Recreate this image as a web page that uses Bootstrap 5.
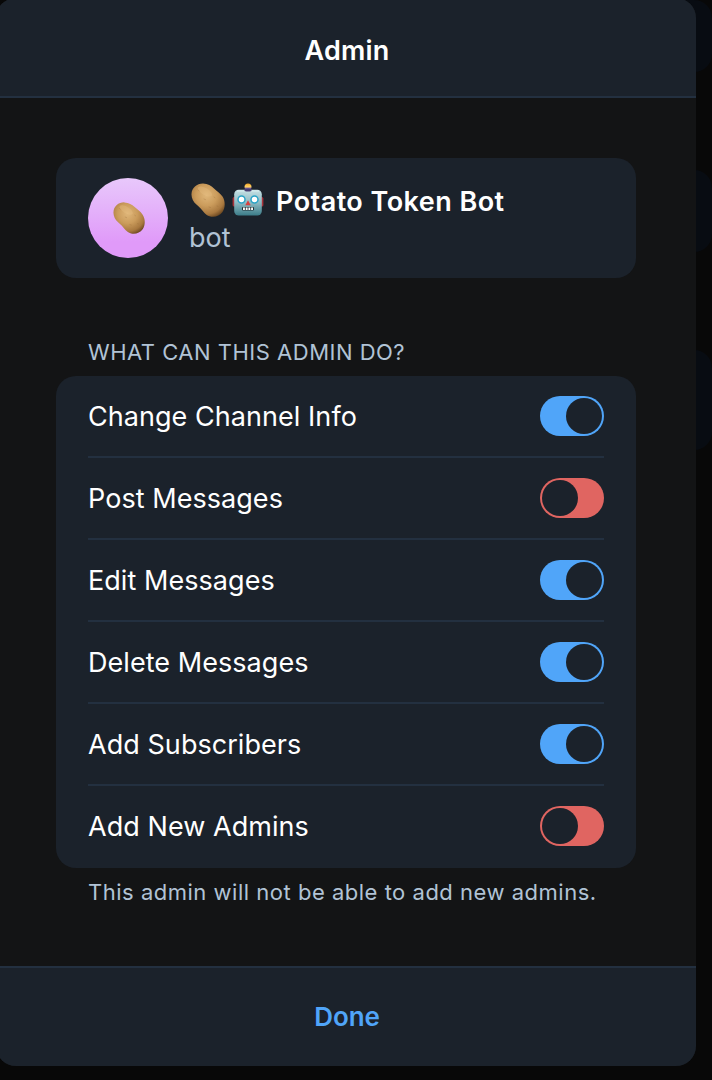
<!DOCTYPE html>
<html lang="en">
<head>
<meta charset="utf-8">
<meta name="viewport" content="width=device-width, initial-scale=1">
<title>Admin</title>
<link href="https://cdn.jsdelivr.net/npm/bootstrap@5.3.0/dist/css/bootstrap.min.css" rel="stylesheet">
<style>
  html, body { height: 100%; }
  body { background: #080808; font-family: Inter, "Liberation Sans", sans-serif; font-size: 27px; line-height: 36px; color: #fff; overflow: hidden; }
  .page { height: 1080px; width: 712px; }
  .backdrop-col { top: 0; right: 0; width: 40px; height: 100%; }
  .backdrop-item { background: #080c12; border-radius: 0 18px 18px 0; }
  .sheet { width: 700px; height: 1068px; margin: -2px 0 0 -4px; background: #131415; border-radius: 20px; }
  .bar { height: 100px; background: #1b222b; font-weight: 600; }
  .bar-top { border-bottom: 2px solid #233040; padding: 7px 0 0 2px; font-size: 27px; letter-spacing: .2px; }
  .bar-bottom { border-top: 2px solid #233040; color: #50a5f9; font-size: 26px; padding-left: 2px; letter-spacing: -.1px; }
  .sheet-body { padding: 60px 60px 0; }
  .panel { background: #1b222b; border-radius: 20px; }
  .profile { height: 120px; padding: 0 32px; gap: 20px; }
  .avatar { width: 80px; height: 80px; background: linear-gradient(#e8c8fb, #e09af9 80%); }
  .profile-text { padding-top: 4px; }
  .name { font-size: 27px; font-weight: 600; letter-spacing: .45px; }
  .muted { color: #b1c3d5; }
  .handle { padding-left: 1px; }
  .caption-top { margin: 56px 32px 6px; font-size: 22px; letter-spacing: .5px; height: 36px; }
  .caption-bottom { margin: 6px 32px 0; font-size: 22px; letter-spacing: .51px; }
  .perms { padding: 0 32px; }
  .perm { height: 82px; border-bottom: 2px solid #233040; letter-spacing: .05px; }
  .perm > span:first-child { padding-top: 2px; }
  .perm:last-child { border-color: transparent; }
  .toggle { width: 64px; height: 40px; padding: 2px; border-radius: 20px; background: #e06561; }
  .toggle::before { content: ""; display: block; width: 36px; height: 36px; border-radius: 50%; background: #1b222b; }
  .toggle[aria-checked=true] { background: #50a5f9; }
  .toggle[aria-checked=true]::before { margin-left: auto; }
</style>
</head>
<body>
<svg width="0" height="0" class="position-absolute" aria-hidden="true">
  <defs>
    <radialGradient id="skin" cx=".45" cy=".36" r=".7">
      <stop offset="0" stop-color="#dfb679"/><stop offset=".45" stop-color="#cb9c5c"/><stop offset=".8" stop-color="#a8783f"/><stop offset="1" stop-color="#6b4720"/>
    </radialGradient>
    <linearGradient id="metal" x1="0" y1="0" x2="0" y2="1">
      <stop offset="0" stop-color="#c6e1e5"/><stop offset=".5" stop-color="#8ebac3"/><stop offset="1" stop-color="#3b7c88"/>
    </linearGradient>
    <linearGradient id="bulb" x1="0" y1="0" x2="0" y2="1">
      <stop offset="0" stop-color="#f2a324"/><stop offset=".5" stop-color="#ffd56b"/><stop offset=".68" stop-color="#6b5390"/><stop offset="1" stop-color="#3f3472"/>
    </linearGradient>
    <symbol id="potato" viewBox="0 0 34 34">
      <path d="M.5 11C.7 4.500 6 .3 12 .4C17 .5 20 2.600 23 5.400C26 8.200 29 9.800 31.500 13.500C34.600 18 34.300 25 31.500 29C28.500 33.300 23 34.600 18.500 33.200C14.500 32 12.300 28.300 9.200 24.900C6.500 22 3.600 20.900 1.800 17C.9 15 .4 13 .5 11Z" fill="url(#skin)"/>
      <g fill="none" stroke="#8c602e" stroke-width="1" stroke-linecap="round" opacity=".25">
        <path d="M7 7l1.500 1M13 16l1.500.6M23 14l1 .7M18 24l1.500.5M26 23l1 .3"/>
      </g>
      <ellipse cx="14" cy="8.500" rx="8" ry="3.500" transform="rotate(30 14 8.500)" fill="#e9c185" opacity=".35"/>
    </symbol>
    <symbol id="robot" viewBox="0 0 32 34">
      <rect x=".6" y="14" width="4" height="9.500" rx="1.500" fill="#a8323a"/>
      <rect x="27.400" y="14" width="4" height="9.500" rx="1.500" fill="#a8323a"/>
      <rect x="2.200" y="6.800" width="27.600" height="25.700" rx="4.500" fill="url(#metal)"/>
      <path d="M5.500 8h21" stroke="#e4f4f5" stroke-width="1.200" stroke-linecap="round" opacity=".7"/>
      <circle cx="16" cy="4" r="3.500" fill="url(#bulb)"/>
      <path d="M12.700 6.500q3.300-1.500 6.600 0l.2 1.500q-3.500 1.200-7 0z" fill="#473d70"/>
      <g stroke="#2aa3c7" stroke-width="1.500" fill="#fff"><circle cx="9.500" cy="16.500" r="3.500"/><circle cx="22.500" cy="16.500" r="3.500"/></g>
      <path d="M16 17.200l2.700 5h-5.400z" fill="#d7403f"/>
      <rect x="10" y="24" width="12" height="3.400" rx="1" fill="#202b30"/>
      <path d="M11 25.700h10" stroke="#fff" stroke-width="2.400" stroke-dasharray="1.900 .8"/>
    </symbol>
  </defs>
</svg>
<div class="page position-relative overflow-hidden">
  <div class="backdrop-col position-absolute d-flex flex-column" aria-hidden="true">
    <div class="backdrop-item" style="height:72px"></div>
    <div class="backdrop-item" style="height:82px;margin-top:98px"></div>
    <div class="backdrop-item" style="height:100px;margin-top:98px"></div>
  </div>
  <main class="sheet position-relative overflow-hidden d-flex flex-column">
    <header class="bar bar-top d-flex align-items-center justify-content-center flex-shrink-0"><span>Admin</span></header>
    <div class="sheet-body flex-grow-1">
      <section class="panel profile d-flex align-items-center">
        <div class="avatar rounded-circle d-flex align-items-center justify-content-center flex-shrink-0">
          <svg width="32" height="32" style="margin-left:2px"><use href="#potato"/></svg>
        </div>
        <div class="profile-text">
          <div class="name d-flex align-items-center">
            <svg width="34" height="34" style="margin:-4px 7px 0 3px"><use href="#potato"/></svg>
            <svg width="32" height="34" style="margin:-4px 12px 0 0"><use href="#robot"/></svg>
            <span>Potato Token Bot</span>
          </div>
          <div class="muted handle">bot</div>
        </div>
      </section>
      <div class="caption-top muted">WHAT CAN THIS ADMIN DO?</div>
      <section class="panel perms">
        <div class="perm d-flex align-items-center justify-content-between"><span>Change Channel Info</span><span class="toggle" role="switch" aria-checked="true"></span></div>
        <div class="perm d-flex align-items-center justify-content-between"><span>Post Messages</span><span class="toggle" role="switch" aria-checked="false"></span></div>
        <div class="perm d-flex align-items-center justify-content-between"><span>Edit Messages</span><span class="toggle" role="switch" aria-checked="true"></span></div>
        <div class="perm d-flex align-items-center justify-content-between"><span>Delete Messages</span><span class="toggle" role="switch" aria-checked="true"></span></div>
        <div class="perm d-flex align-items-center justify-content-between"><span>Add Subscribers</span><span class="toggle" role="switch" aria-checked="true"></span></div>
        <div class="perm d-flex align-items-center justify-content-between"><span>Add New Admins</span><span class="toggle" role="switch" aria-checked="false"></span></div>
      </section>
      <div class="caption-bottom muted">This admin will not be able to add new admins.</div>
    </div>
    <footer class="bar bar-bottom d-flex align-items-center justify-content-center flex-shrink-0"><span>Done</span></footer>
  </main>
</div>
<script src="https://cdn.jsdelivr.net/npm/bootstrap@5.3.0/dist/js/bootstrap.bundle.min.js"></script>
</body>
</html>
